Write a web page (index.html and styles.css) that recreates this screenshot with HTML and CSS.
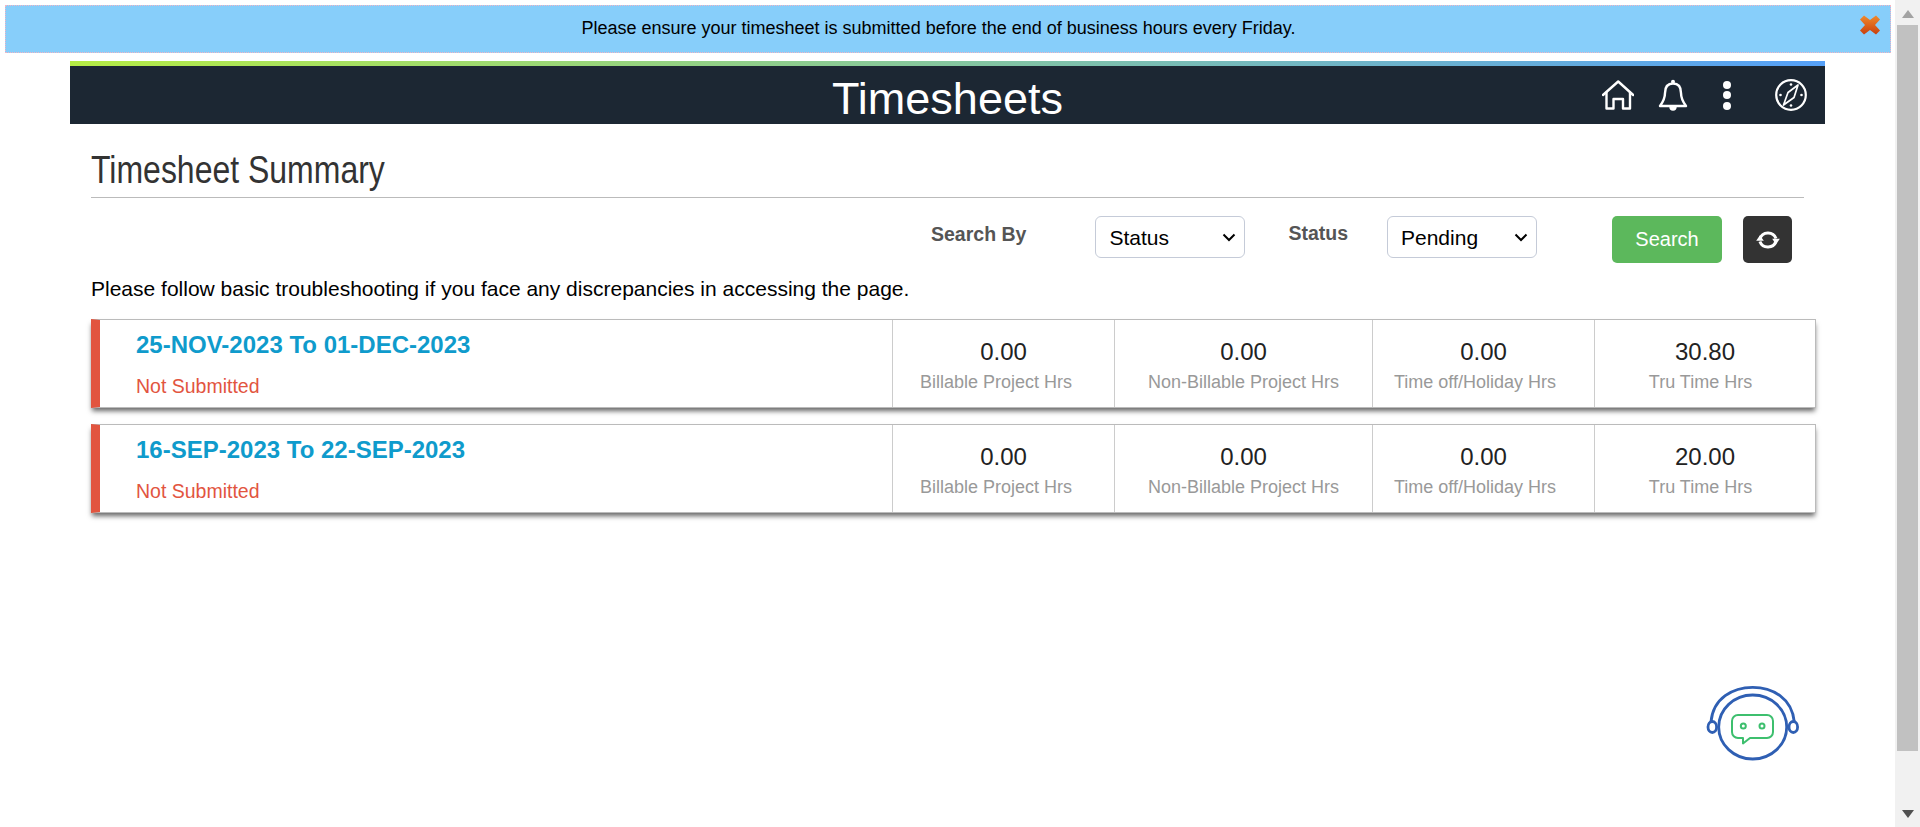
FILE: index.html
```html
<!DOCTYPE html>
<html lang="en">
<head>
    <meta charset="UTF-8">
    <meta name="viewport" content="width=device-width, initial-scale=1.0">
    <title>Timesheets</title>
    <link rel="stylesheet" href="styles.css">
</head>
<body>
    <div class="page">
        <div class="notice">
            <p class="notice-text">Please ensure your timesheet is submitted before the end of business hours every Friday.</p>
            <svg class="notice-close" viewBox="0 0 20 20" width="20" height="20">
                <defs>
                    <linearGradient id="closeFill" x1="0" y1="0" x2="0" y2="1">
                        <stop offset="0" stop-color="#f08a2c"/>
                        <stop offset="1" stop-color="#c9400e"/>
                    </linearGradient>
                </defs>
                <path fill="url(#closeFill)" d="M4 0.5 L10 5 L16 0.5 L20 4.5 L15 10 L20 15.5 L16 19.5 L10 15 L4 19.5 L0 15.5 L5 10 L0 4.5 Z"/>
            </svg>
        </div>

        <header class="app-header">
            <div class="app-header-bar"></div>
            <div class="app-header-main">
                <h1 class="app-title">Timesheets</h1>
                <nav class="app-icons">
                    <svg class="icon icon-home" viewBox="0 0 32 32" width="32" height="32" fill="none" stroke="#fff" stroke-width="2.4" stroke-linejoin="round" stroke-linecap="round">
                        <path d="M1 16 L16.2 2.5 L31.2 16"/>
                        <path d="M4.5 13.5 V29.5 H11.5 V20 H21 V29.5 H28 V13.5"/>
                    </svg>
                    <svg class="icon icon-bell" viewBox="0 0 32 32" width="32" height="32" fill="none" stroke="#fff" stroke-width="2.4" stroke-linejoin="round">
                        <path d="M3 27 C6 23 8 20 8 14 C8 8 11 4.5 16 4.5 C21 4.5 24 8 24 14 C24 20 26 23 29 27 Z"/>
                        <circle cx="16" cy="2.8" r="2" fill="#fff" stroke="none"/>
                        <path d="M12.3 28 a3.7 3.7 0 0 0 7.4 0 Z" fill="#fff" stroke="none"/>
                    </svg>
                    <svg class="icon icon-more" viewBox="0 0 32 32" width="32" height="32" fill="#fff">
                        <circle cx="16" cy="6" r="4"/>
                        <circle cx="16" cy="16" r="4"/>
                        <circle cx="16" cy="27" r="4"/>
                    </svg>
                    <svg class="icon icon-compass" viewBox="0 0 32 32" width="32" height="32" fill="none" stroke="#fff" stroke-width="2.2">
                        <circle cx="16" cy="16" r="14.8"/>
                        <path d="M23 6 L19 18.5 L8.5 26 L13 13.5 Z" stroke-width="1.7" stroke-linejoin="round"/>
                        <g fill="#fff" stroke="none">
                            <circle cx="16" cy="5.5" r="1.3"/>
                            <circle cx="26.5" cy="16" r="1.3"/>
                            <circle cx="16" cy="26.5" r="1.3"/>
                            <circle cx="5.5" cy="16" r="1.3"/>
                        </g>
                    </svg>
                </nav>
            </div>
        </header>

        <main class="content">
            <h2 class="page-heading"><span>Timesheet Summary</span></h2>

            <form class="search-row">
                <label class="search-label label-by">Search By</label>
                <select class="search-select">
                    <option>Status</option>
                </select>
                <label class="search-label label-status">Status</label>
                <select class="search-select select-status">
                    <option>Pending</option>
                </select>
                <button type="button" class="btn-search">Search</button>
                <button type="button" class="btn-refresh" aria-label="Refresh">
                    <svg viewBox="0 0 24 24" width="24" height="24" fill="none" stroke="#fff" stroke-width="3">
                        <path d="M3.9 11 A8.5 8.5 0 0 1 20 10.5"/>
                        <path d="M20 13 A8.5 8.5 0 0 1 3.9 13.5"/>
                        <path d="M16.2 10.8 H23.8 L20 16.5 Z" fill="#fff" stroke="none"/>
                        <path d="M0.2 12.8 H7.8 L4 7.2 Z" fill="#fff" stroke="none"/>
                    </svg>
                </button>
            </form>

            <p class="help-text">Please follow basic troubleshooting if you face any discrepancies in accessing the page.</p>

            <section class="card">
                <div class="card-info">
                    <a class="card-date">25-NOV-2023 To 01-DEC-2023</a>
                    <span class="card-status">Not Submitted</span>
                </div>
                <div class="card-cell cell-billable"><strong>0.00</strong><span>Billable Project Hrs</span></div>
                <div class="card-cell cell-wide"><strong>0.00</strong><span>Non-Billable Project Hrs</span></div>
                <div class="card-cell cell-timeoff"><strong>0.00</strong><span>Time off/Holiday Hrs</span></div>
                <div class="card-cell cell-tru"><strong>30.80</strong><span>Tru Time Hrs</span></div>
            </section>

            <section class="card">
                <div class="card-info">
                    <a class="card-date">16-SEP-2023 To 22-SEP-2023</a>
                    <span class="card-status">Not Submitted</span>
                </div>
                <div class="card-cell cell-billable"><strong>0.00</strong><span>Billable Project Hrs</span></div>
                <div class="card-cell cell-wide"><strong>0.00</strong><span>Non-Billable Project Hrs</span></div>
                <div class="card-cell cell-timeoff"><strong>0.00</strong><span>Time off/Holiday Hrs</span></div>
                <div class="card-cell cell-tru"><strong>20.00</strong><span>Tru Time Hrs</span></div>
            </section>
        </main>

        <svg class="chat-bot" viewBox="0 0 96 80" width="96" height="80" fill="none">
            <g stroke="#2f5fb3" stroke-width="2.8">
                <ellipse cx="47.7" cy="43" rx="34" ry="32"/>
                <path d="M6 38 C8 14 28 3.3 47.7 3.3 S87 14 89.3 38"/>
                <ellipse cx="7.3" cy="43" rx="4.3" ry="5.5" fill="#fff"/>
                <ellipse cx="88.3" cy="43" rx="4.3" ry="5.5" fill="#fff"/>
            </g>
            <g stroke="#3dbf6e" stroke-width="2" stroke-linejoin="round">
                <path d="M33 31 H62 a6 6 0 0 1 6 6 V48 a6 6 0 0 1 -6 6 H45 L38 59.5 V54 H33 a6 6 0 0 1 -6 -6 V37 a6 6 0 0 1 6 -6 Z"/>
                <circle cx="38.3" cy="42" r="2.5"/>
                <circle cx="57" cy="42" r="2.5"/>
            </g>
        </svg>
    </div>

    <div class="scrollbar">
        <div class="scroll-arrow-up"></div>
        <div class="scroll-thumb"></div>
        <div class="scroll-arrow-down"></div>
    </div>
</body>
</html>
```

FILE: styles.css
```css
/* Timesheet summary page */
html, body {
    height: 100%;
    overflow: hidden;
}

body {
    margin: 0;
    display: flex;
    font-family: 'Liberation Sans', Arial, sans-serif;
    background: #fff;
    color: #000;
}

.page {
    flex: 1;
    position: relative;
    min-width: 0;
}

/* notice */
.notice {
    display: flex;
    align-items: center;
    height: 48px;
    margin: 5px 4px 0 5px;
    box-sizing: border-box;
    background: #87cefa;
    border: 1px dotted #f2b5c4;
}

.notice-text {
    flex: 1;
    margin: 0 0 2px;
    padding-left: 11px;
    text-align: center;
    font-size: 18px;
}

.notice-close {
    margin: -8px 10px 0 0;
}

/* header */
.app-header {
    margin: 8px 70px 0;
}

.app-header-bar {
    height: 5px;
    background: linear-gradient(to right, #b5ec45, #55a0f8);
}

.app-header-main {
    display: grid;
    grid-template-columns: 1fr auto 1fr;
    align-items: center;
    height: 58px;
    background: #1c2733;
}

.app-title {
    grid-column: 2;
    margin: 0;
    padding-top: 8px;
    color: #fff;
    font-size: 45px;
    line-height: 44px;
    font-weight: normal;
}

.app-icons {
    grid-column: 3;
    display: flex;
    justify-content: flex-end;
    padding: 0 18px 1px 0;
}

.icon-bell {
    margin-left: 23px;
}

.icon-more {
    margin-left: 22px;
}

.icon-compass {
    margin-left: 32px;
}

/* content */
.content {
    padding: 0 91px;
}

.page-heading {
    margin: 21px 0 0;
    padding-top: 4px;
    height: 53px;
    box-sizing: border-box;
    border-bottom: 1px solid #bbb;
    font-size: 39px;
    line-height: 42px;
    font-weight: normal;
    color: #333;
}

.page-heading span {
    display: inline-block;
    transform: scaleX(0.82);
    transform-origin: left;
    white-space: nowrap;
}

.search-row {
    display: flex;
    justify-content: flex-end;
    align-items: flex-start;
    margin-top: 18px;
    padding-right: 12px;
}

.search-label {
    font-size: 19.5px;
    font-weight: bold;
    color: #555;
    line-height: 20px;
}

.label-by {
    margin: 8px 69px 0 0;
}

.label-status {
    margin: 7px 39px 0 43px;
}

.search-select {
    width: 150px;
    height: 42px;
    padding: 0 28px 0 13px;
    appearance: none;
    background: #fff url("data:image/svg+xml,%3Csvg xmlns='http://www.w3.org/2000/svg' width='14' height='9'%3E%3Cpath d='M1.5 1.5 L7 7 L12.5 1.5' fill='none' stroke='%23000' stroke-width='2'/%3E%3C/svg%3E") no-repeat right 8px center;
    border: 1px solid #c5cbd8;
    border-radius: 6px;
    font-family: inherit;
    font-size: 21px;
    color: #000;
}

.btn-search {
    width: 110px;
    height: 47px;
    margin-left: 75px;
    background: #5cb85c;
    border: none;
    border-radius: 5px;
    color: #fff;
    font-family: inherit;
    font-size: 20px;
}

.btn-refresh {
    display: flex;
    align-items: center;
    justify-content: center;
    width: 49px;
    height: 47px;
    margin-left: 21px;
    padding: 0;
    background: #333;
    border: none;
    border-radius: 5px;
}

.help-text {
    margin: 14px 0 18px;
    font-size: 21px;
    line-height: 24px;
}

/* cards */
.card {
    display: flex;
    height: 89px;
    margin: 0 -12px 16px 0;
    box-sizing: border-box;
    background: #fff;
    border: 1px solid #bbb;
    border-left: 9px solid #e2553f;
    box-shadow: 0 4px 5px -1px #666;
}

.card-info {
    flex: 1;
    padding: 12px 0 0 36px;
}

.card-date {
    display: block;
    font-size: 24px;
    font-weight: bold;
    line-height: 26px;
    color: #0f9bcc;
}

.card-status {
    display: block;
    margin-top: 16px;
    font-size: 19.5px;
    line-height: 24px;
    color: #e2553f;
}

.card-cell {
    display: flex;
    flex-direction: column;
    align-items: center;
    width: 221px;
    padding-top: 18px;
    border-left: 1px solid #ccc;
}

.cell-wide {
    width: 257px;
}

.cell-tru {
    width: 220px;
}

.card-cell strong {
    font-size: 24px;
    font-weight: normal;
    line-height: 28px;
    color: #222;
}

.card-cell span {
    margin-top: 5px;
    font-size: 18px;
    line-height: 22px;
    color: #999;
}

/* labels sit a little left of the figures above them */
.cell-billable span {
    margin-right: 15px;
}

.cell-timeoff span {
    margin-right: 17px;
}

.cell-tru span {
    margin-right: 9px;
}

/* floating chat button */
.chat-bot {
    position: absolute;
    left: 1705px;
    top: 684px;
}

/* scrollbar */
.scrollbar {
    display: flex;
    flex-direction: column;
    align-items: center;
    flex: 0 0 25px;
    background: #f1f1f1;
}

.scroll-arrow-up {
    margin: 10px 0 7px;
    border: 6px solid transparent;
    border-top: 0;
    border-bottom: 8px solid #a3a3a3;
}

.scroll-thumb {
    width: 21px;
    height: 726px;
    background: #c1c1c1;
}

.scroll-arrow-down {
    margin-top: 59px;
    border: 6px solid transparent;
    border-bottom: 0;
    border-top: 8px solid #505050;
}
```
